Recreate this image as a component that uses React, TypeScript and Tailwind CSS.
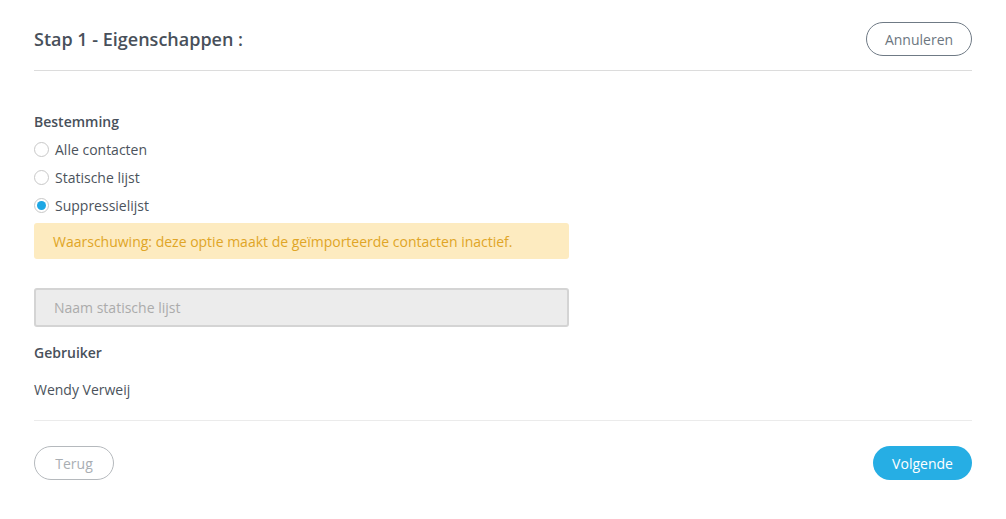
import React, { useState } from 'react';

const options = ['Alle contacten', 'Statische lijst', 'Suppressielijst'];

const Radio: React.FC<{ checked: boolean; label: string; onSelect: () => void }> = ({ checked, label, onSelect }) => (
  <label className="flex h-[28px] items-center gap-[6px] cursor-pointer" onClick={onSelect}>
    <span className="flex h-[15px] w-[15px] items-center justify-center rounded-full border border-[#c8c8c8] bg-white">
      {checked && <span className="h-[9px] w-[9px] rounded-full bg-[#1ea7e4]" />}
    </span>
    <span className="text-[14px] text-[#4b535c]">{label}</span>
  </label>
);

const App: React.FC = () => {
  const [selected, setSelected] = useState(2);

  return (
    <div className="min-h-screen bg-white pl-[34px] pr-[34px] pt-[22px]" style={{ fontFamily: '"Open Sans", sans-serif' }}>
      {/* Header */}
      <div className="flex items-center justify-between border-b border-[#dcdcdc] pb-[14px]">
        <h1 className="text-[18px] leading-[24px] font-semibold text-[#48505a]">Stap 1 - Eigenschappen :</h1>
        <button className="h-[34px] w-[106px] rounded-full border border-[#6f7a85] text-[14px] text-[#6c7680]">
          Annuleren
        </button>
      </div>

      {/* Bestemming */}
      <div className="mt-[41px] text-[14px] leading-[20px] font-semibold text-[#48505a]">Bestemming</div>
      <div className="mt-[3px] flex flex-col">
        {options.map((o, i) => (
          <Radio key={o} label={o} checked={selected === i} onSelect={() => setSelected(i)} />
        ))}
      </div>

      <div className="mt-[4px] flex h-[36px] w-[535px] items-center rounded-[3px] bg-[#fdebc0] px-[19px] text-[14px] text-[#e0a526]">
        Waarschuwing: deze optie maakt de geïmporteerde contacten inactief.
      </div>

      <input
        disabled
        placeholder="Naam statische lijst"
        className="mt-[29px] block h-[39px] w-[535px] rounded-[3px] border-2 border-[#d4d4d4] bg-[#ececec] px-[18px] text-[14px] text-[#4b535c] placeholder:text-[#ababab]"
      />

      <div className="mt-[16px] text-[14px] leading-[20px] font-semibold text-[#48505a]">Gebruiker</div>
      <div className="mt-[17px] text-[14px] leading-[20px] text-[#4b535c]">Wendy Verweij</div>

      {/* Footer */}
      <div className="mt-[20px] flex items-center justify-between border-t border-[#ebebeb] pt-[25px]">
        <button className="h-[34px] w-[80px] rounded-full border border-[#b5b9bd] text-[14px] text-[#a9aeb3]">
          Terug
        </button>
        <button className="h-[34px] w-[99px] rounded-full bg-[#26aee4] text-[14px] text-white">
          Volgende
        </button>
      </div>
    </div>
  );
};

export default App;
